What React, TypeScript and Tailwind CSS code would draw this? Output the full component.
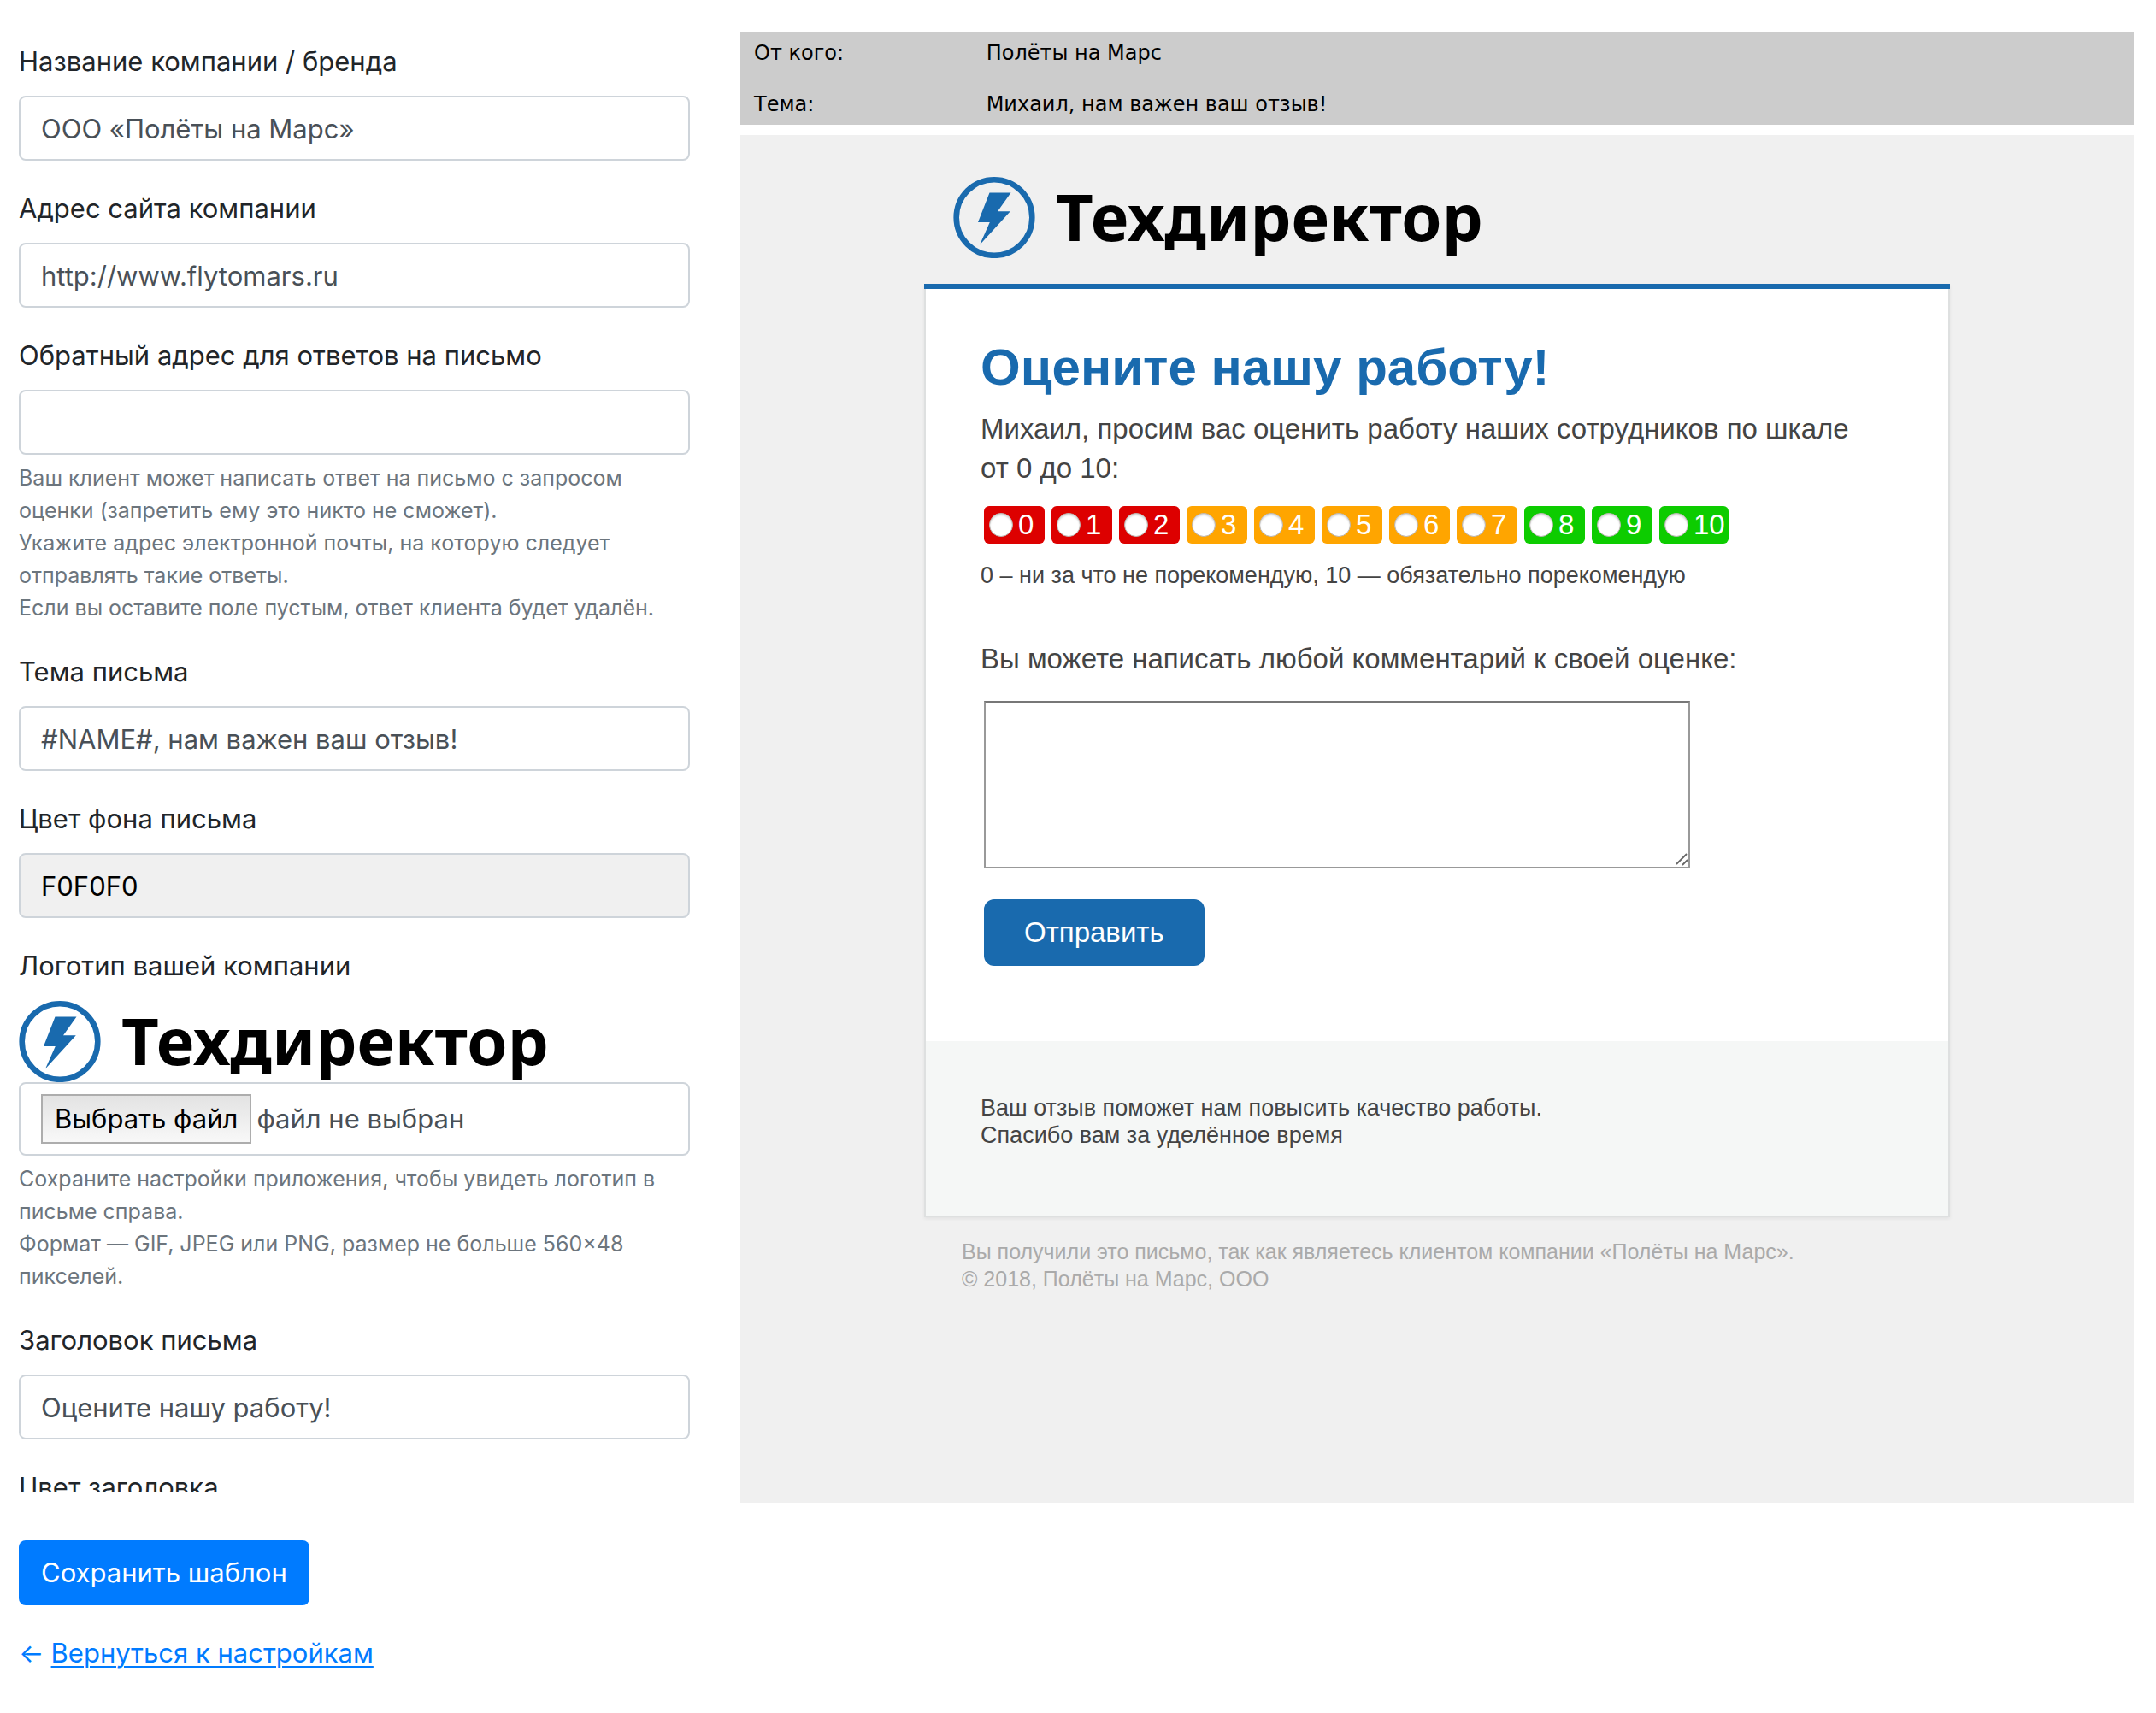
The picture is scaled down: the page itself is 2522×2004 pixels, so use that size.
import type { ReactNode } from 'react';

const BRAND = '#196aae';

function Logo() {
  return (
    <div className="flex items-center gap-6">
      <svg viewBox="0 0 96 96" className="size-24 shrink-0" aria-hidden="true">
        <circle cx="48" cy="48.5" r="44.3" fill="none" stroke={BRAND} strokeWidth="6.6" />
        <path d="M42.5 19.5H67.5L52 41.3H66.8L31 80.5L42.8 54H29Z" fill={BRAND} />
      </svg>
      <span className="pb-0.5 font-['Noto_Sans',sans-serif] text-[76px] leading-[72px] font-bold text-black">
        Техдиректор
      </span>
    </div>
  );
}

function Label({ htmlFor, children }: { htmlFor: string; children: ReactNode }) {
  return (
    <label htmlFor={htmlFor} className="mb-4 block text-[31px] leading-[48px] text-[#212529]">
      {children}
    </label>
  );
}

function Hint({ children }: { children: ReactNode }) {
  return <small className="mt-2 block text-[25px] leading-[38px] text-[#6c757d]">{children}</small>;
}

function TextField({ id, label, value, hint }: { id: string; label: string; value: string; hint?: ReactNode }) {
  return (
    <div>
      <Label htmlFor={id}>{label}</Label>
      <input
        id={id}
        type="text"
        defaultValue={value}
        className="block h-[76px] w-full rounded-lg border-2 border-[#ced4da] bg-white px-6 text-[31px] text-[#495057]"
      />
      {hint && <Hint>{hint}</Hint>}
    </div>
  );
}

const SCORES = [
  { value: 0, color: 'bg-[#dd0000]' },
  { value: 1, color: 'bg-[#dd0000]' },
  { value: 2, color: 'bg-[#dd0000]' },
  { value: 3, color: 'bg-[#ffa500]' },
  { value: 4, color: 'bg-[#ffa500]' },
  { value: 5, color: 'bg-[#ffa500]' },
  { value: 6, color: 'bg-[#ffa500]' },
  { value: 7, color: 'bg-[#ffa500]' },
  { value: 8, color: 'bg-[#0dcc00]' },
  { value: 9, color: 'bg-[#0dcc00]' },
  { value: 10, color: 'bg-[#0dcc00]' },
];

function SettingsForm() {
  return (
    <form className="pt-12 font-['Inter',sans-serif]" onSubmit={(e) => e.preventDefault()}>
      <div className="flex h-[calc(100vh-306px)] flex-col gap-8 overflow-hidden">
        <TextField id="company" label="Название компании / бренда" value="ООО «Полёты на Марс»" />
        <TextField id="site" label="Адрес сайта компании" value="http://www.flytomars.ru" />
        <TextField
          id="reply"
          label="Обратный адрес для ответов на письмо"
          value=""
          hint={
            <>
              Ваш клиент может написать ответ на письмо с запросом оценки (запретить ему это никто не сможет).
              <br />
              Укажите адрес электронной почты, на которую следует отправлять такие ответы.
              <br />
              Если вы оставите поле пустым, ответ клиента будет удалён.
            </>
          }
        />
        <TextField id="subject" label="Тема письма" value="#NAME#, нам важен ваш отзыв!" />
        <div>
          <Label htmlFor="background">Цвет фона письма</Label>
          <input
            id="background"
            type="text"
            defaultValue="F0F0F0"
            className="block h-[76px] w-full rounded-lg border-2 border-[#ced4da] bg-[#f0f0f0] px-6 text-[31px] text-black"
          />
        </div>
        <div>
          <Label htmlFor="logo">Логотип вашей компании</Label>
          <Logo />
          <label
            htmlFor="logo"
            className="relative flex h-[86px] items-center gap-1.5 rounded-lg border-2 border-[#ced4da] bg-white px-6 text-[31px] text-[#495057]"
          >
            <input id="logo" type="file" className="sr-only" />
            <span className="flex h-[58px] items-center border-2 border-[#adadad] bg-linear-to-b from-[#e3e3e3] to-[#f8f8f8] px-3.5 text-black">
              Выбрать файл
            </span>
            <span>файл не выбран</span>
          </label>
          <Hint>
            Сохраните настройки приложения, чтобы увидеть логотип в письме справа.
            <br />
            Формат — GIF, JPEG или PNG, размер не больше 560×48 пикселей.
          </Hint>
        </div>
        <TextField id="heading" label="Заголовок письма" value="Оцените нашу работу!" />
        <TextField id="heading-color" label="Цвет заголовка" value="" />
      </div>
      <button type="submit" className="mt-14 block h-[76px] rounded-lg bg-[#007bff] px-[26px] text-[31px] text-white">
        Сохранить шаблон
      </button>
      <p className="mt-8 flex gap-2 text-[31px] leading-[48px] text-[#007bff]">
        <span>←</span>
        <a href="#settings" className="underline decoration-2 underline-offset-4">
          Вернуться к настройкам
        </a>
      </p>
    </form>
  );
}

function EmailCard() {
  return (
    <form
      className="border-t-[6px] border-t-[#196aae] bg-white text-[#444444] shadow-[0_2px_4px_rgba(0,0,0,0.06)]"
      onSubmit={(e) => e.preventDefault()}
    >
      <div className="border-2 border-t-0 border-[#dee0e0]">
        <div className="px-16 pt-14 pb-[88px]">
          <h1 className="text-[60px] leading-[72px] font-bold text-[#196aae]">Оцените нашу работу!</h1>
          <p className="mt-[13px] text-[33px] leading-[46px]">
            Михаил, просим вас оценить работу наших сотрудников по шкале
            <br />
            от 0 до 10:
          </p>
          <div className="mt-[21px] ml-1 flex gap-2">
            {SCORES.map(({ value, color }) => (
              <label
                key={value}
                className={`flex h-11 min-w-[71px] items-center gap-1.5 rounded-md pr-1 pl-1.5 text-[33px] leading-[44px] text-white ${color}`}
              >
                <input
                  type="radio"
                  name="score"
                  value={value}
                  className="size-7 appearance-none rounded-full border border-[#b9b4b0] bg-white shadow-[inset_0_2px_2px_rgba(0,0,0,0.15)]"
                />
                {value}
              </label>
            ))}
          </div>
          <p className="mt-[17px] text-[27px] leading-[40px]">
            0 – ни за что не порекомендую, 10 — обязательно порекомендую
          </p>
          <label htmlFor="comment" className="mt-[55px] block text-[33px] leading-[46px]">
            Вы можете написать любой комментарий к своей оценке:
          </label>
          <div className="relative mt-[26px] ml-1 w-full max-w-[826px]">
            <textarea
              id="comment"
              className="block h-[196px] w-full resize-none border-2 border-[#999999] border-t-[#777777] bg-white p-1 text-[27px]"
            />
            <svg
              viewBox="0 0 16 16"
              className="absolute right-0.5 bottom-0.5 size-4"
              fill="none"
              stroke="#666666"
              strokeWidth="1.8"
              aria-hidden="true"
            >
              <path d="M2 13L14 1M9 14L15 8" />
            </svg>
          </div>
          <button
            type="submit"
            className="mt-9 ml-1 block h-[78px] rounded-xl bg-[#196aae] px-[47px] text-[33px] text-white"
          >
            Отправить
          </button>
        </div>
        <p className="bg-[#f5f7f6] px-16 pt-[62px] pb-[78px] text-[27px] leading-[32px]">
          Ваш отзыв поможет нам повысить качество работы.
          <br />
          Спасибо вам за уделённое время
        </p>
      </div>
    </form>
  );
}

function EmailPreview() {
  return (
    <section className="pt-[38px]">
      <dl className="grid grid-cols-[17%_1fr] gap-y-7 bg-[#cccccc] px-4 py-2 font-['DejaVu_Sans',sans-serif] text-[24px] leading-[32px] text-black">
        <dt>От кого:</dt>
        <dd>Полёты на Марс</dd>
        <dt>Тема:</dt>
        <dd>Михаил, нам важен ваш отзыв!</dd>
      </dl>
      <div className="mt-3 min-h-[calc(100vh-404px)] bg-[#f0f0f0] pt-12 pb-12 font-['Liberation_Sans',sans-serif]">
        <div className="mx-auto w-full max-w-[1200px]">
          <div className="mb-[30px] pl-[34px]">
            <Logo />
          </div>
          <EmailCard />
          <p className="mt-6 pl-11 text-[25px] leading-[32px] text-[#aaaaaa]">
            Вы получили это письмо, так как являетесь клиентом компании «Полёты на Марс».
            <br />© 2018, Полёты на Марс, ООО
          </p>
        </div>
      </div>
    </section>
  );
}

export default function App() {
  return (
    <main className="grid min-h-screen grid-cols-[785fr_1630fr] items-start gap-[59px] bg-white pr-[26px] pl-[22px]">
      <SettingsForm />
      <EmailPreview />
    </main>
  );
}
